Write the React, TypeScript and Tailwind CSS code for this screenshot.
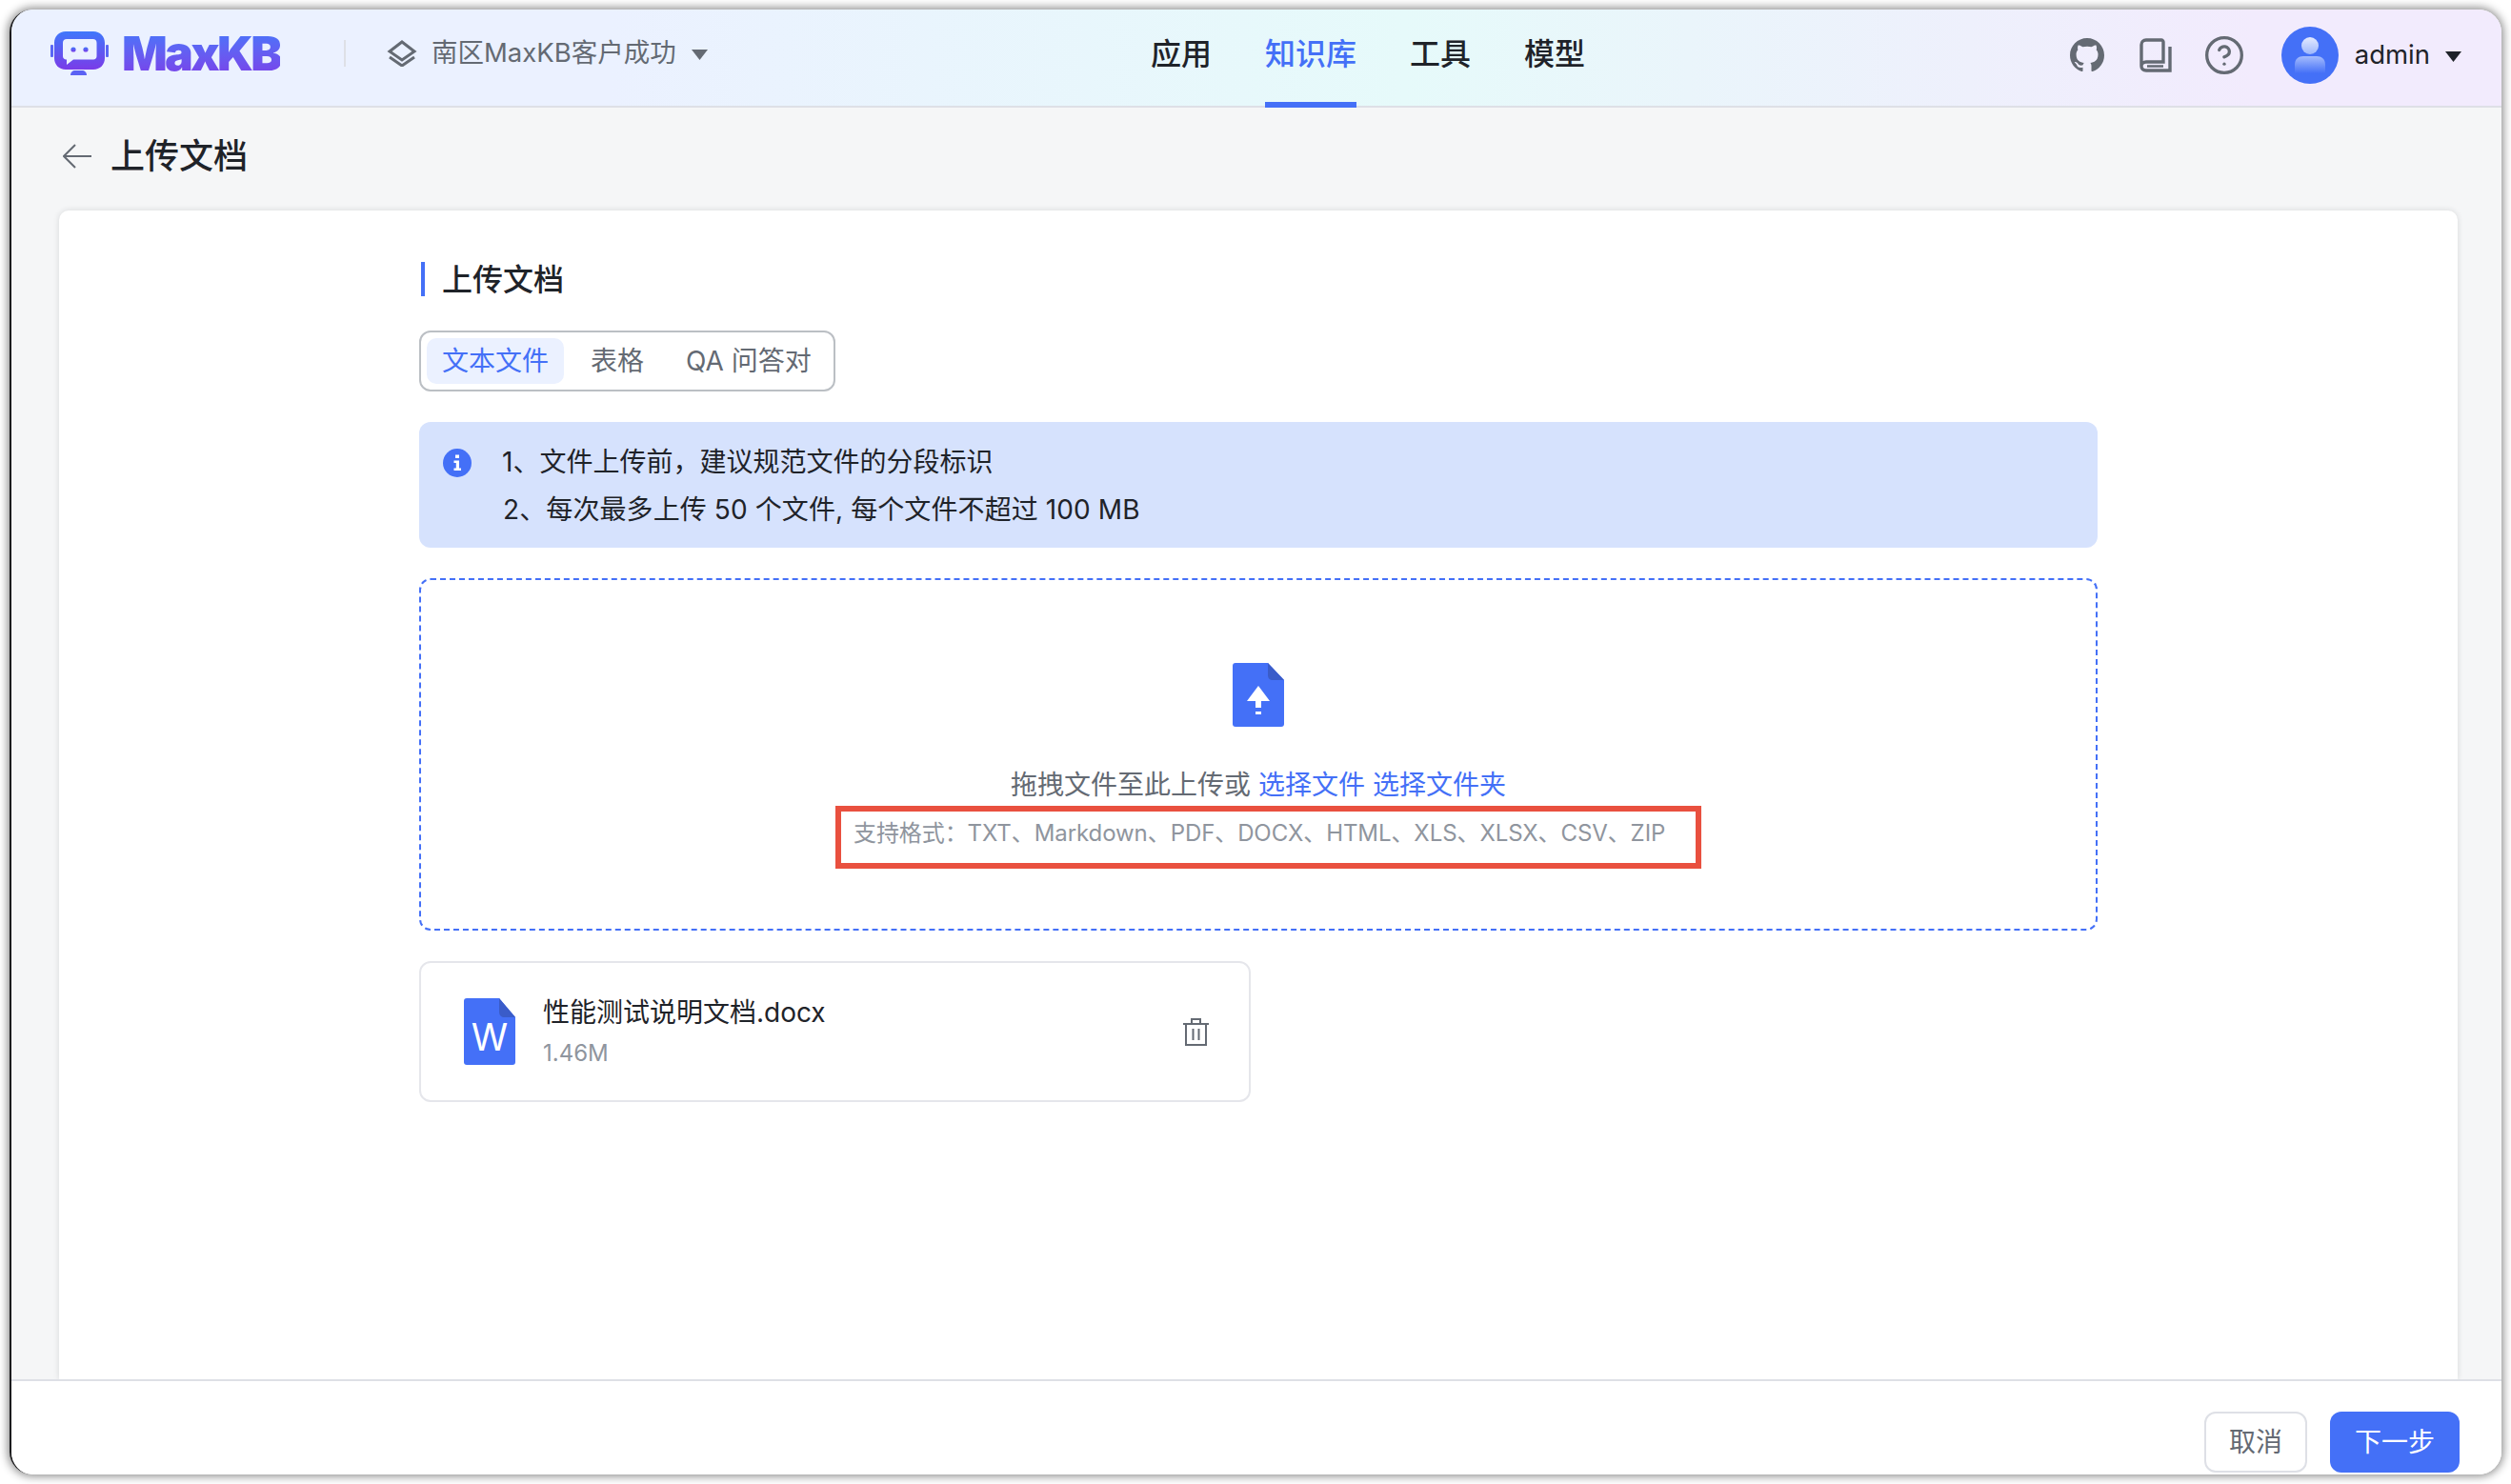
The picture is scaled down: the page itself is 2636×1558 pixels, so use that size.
import { CircleHelp } from "lucide-react";

const navItems = ["应用", "知识库", "工具", "模型"];

function Logo() {
  return (
    <svg width="64" height="48" viewBox="0 0 64 48">
      <defs>
        <linearGradient id="logoFill" x1="0" y1="0" x2="0" y2="1">
          <stop offset="0" stopColor="#3f78fb" />
          <stop offset="1" stopColor="#7a3ce8" />
        </linearGradient>
      </defs>
      <path
        fill="url(#logoFill)"
        fillRule="evenodd"
        d="M18 1h29c7 0 12 5 12 12v16c0 7-5 12-12 12H18c-7 0-12-5-12-12V13C6 6 11 1 18 1zM19 9c-2.500 0-4 1.500-4 4v14c0 2 1.500 3.500 3.500 3.500h.5v5.500l7-5.500h21c2 0 3.500-1.500 3.500-3.500V13c0-2.500-1.500-4-4-4z"
      />
      <circle cx="26" cy="20" r="2.600" fill="url(#logoFill)" />
      <circle cx="39" cy="20" r="2.600" fill="url(#logoFill)" />
      <rect x="2" y="15" width="3" height="13" rx="1" fill="#5a66f5" />
      <rect x="60" y="15" width="3" height="13" rx="1" fill="#5a66f5" />
      <path d="M23 47c0-3 2-5 5-5h7c3 0 5 2 5 5z" fill="#5b62f4" />
    </svg>
  );
}

function UploadFileIcon() {
  return (
    <svg width="54" height="67" viewBox="0 0 54 67">
      <path d="M3 0h34l17 18v46c0 2-1 3-3 3H3c-2 0-3-1-3-3V3c0-2 1-3 3-3z" fill="#4470f7" />
      <path d="M37 0l17 18H42c-3 0-5-2-5-5z" fill="#3a5cc9" />
      <path d="M27 24l12 16h-9v7h-6v-7h-9z" fill="#fff" />
      <rect x="24" y="51" width="6" height="3" fill="#fff" />
    </svg>
  );
}

function WordIcon() {
  return (
    <svg width="54" height="70" viewBox="0 0 54 70">
      <path d="M3 0h34l17 20v47c0 2-1 3-3 3H3c-2 0-3-1-3-3V3c0-2 1-3 3-3z" fill="#4470f7" />
      <path d="M37 0l17 20H43c-4 0-6-2-6-6z" fill="#3a5cc9" />
      <text x="27" y="55" textAnchor="middle" fontSize="39" fill="#fff" fontFamily="Inter">
        W
      </text>
    </svg>
  );
}

function BookIcon() {
  return (
    <svg width="34" height="37" viewBox="0 0 34 37" fill="none" stroke="#646a73" strokeWidth="3.400">
      <path d="M2 29V7c0-3 2-5 5-5h16c1 0 2 1 2 2v21H7c-3 0-5 2-5 4.500S4 34 7 34h25V9" />
      <path d="M8 29.500h17" strokeWidth="2.500" />
    </svg>
  );
}

function Avatar() {
  return (
    <svg width="60" height="60" viewBox="0 0 60 60">
      <defs>
        <linearGradient id="headFill" x1="0" y1="0" x2="0" y2="1">
          <stop offset="0" stopColor="#e3eaff" />
          <stop offset="1" stopColor="#9db7fc" />
        </linearGradient>
        <linearGradient id="bodyFill" x1="0" y1="0" x2="0" y2="1">
          <stop offset="0" stopColor="#a5bcfd" />
          <stop offset="1" stopColor="#4470f7" />
        </linearGradient>
      </defs>
      <circle cx="30" cy="30" r="30" fill="#4470f7" />
      <circle cx="30" cy="20" r="9" fill="url(#headFill)" />
      <path d="M14 49V40c0-6 4-9 9-9h14c5 0 9 3 9 9v9z" fill="url(#bodyFill)" />
    </svg>
  );
}

function Caret({ color }: { color: string }) {
  return (
    <svg width="17" height="11" viewBox="0 0 17 11">
      <path d="M0 0h17l-8.500 11z" fill={color} />
    </svg>
  );
}

function Header() {
  return (
    <header className="flex h-[103px] shrink-0 border-b-2 border-[#dee0e6] bg-[linear-gradient(90deg,#ebf1ff_24%,#e6fafa_56%,#f2ebfd_90%)]">
      <div className="flex h-[92px] w-[1196px] shrink-0 items-center pl-[39px]">
        <Logo />
        <span className="ml-[13px] bg-gradient-to-b from-[#3f78fb] to-[#7a3ce8] bg-clip-text text-[50px] leading-[54px] font-black tracking-[-2.700px] text-transparent">
          MaxKB
        </span>
        <span className="ml-[67px] h-[28px] w-[2px] bg-[#dee0e6]" />
        <svg className="ml-[43px]" width="32" height="28" viewBox="0 0 32 28" fill="none" stroke="#646a73" strokeWidth="3">
          <path d="M16 2l13 10-13 9-13-9z" />
          <path d="M3 18l13 9 13-9" />
        </svg>
        <span className="ml-[15px] text-[27.500px] text-[#646a73]">南区MaxKB客户成功</span>
        <span className="ml-[16px] pt-[2px]">
          <Caret color="#646a73" />
        </span>
      </div>
      <nav className="-mb-[2px] flex gap-[56px]">
        {navItems.map((item) => (
          <a
            key={item}
            className={`flex items-center border-b-[6px] pb-[3px] text-[32px] font-medium ${
              item === "知识库" ? "border-[#4470f7] text-[#4470f7]" : "border-transparent text-[#1f2329]"
            }`}
          >
            {item}
          </a>
        ))}
      </nav>
      <div className="ml-auto flex h-[96px] items-center pr-[42px]">
        <svg width="36" height="36" viewBox="0 0 16 16" fill="#646a73">
          <path d="M8 0C3.580 0 0 3.580 0 8c0 3.540 2.290 6.530 5.470 7.590.4.070.55-.17.55-.38 0-.19-.01-.82-.01-1.490-2.010.37-2.530-.49-2.690-.94-.09-.23-.48-.94-.82-1.130-.28-.15-.68-.52-.01-.53.63-.01 1.080.58 1.230.82.72 1.210 1.870.87 2.330.66.07-.52.28-.87.51-1.070-1.780-.2-3.640-.89-3.640-3.950 0-.87.31-1.590.82-2.150-.08-.2-.36-1.020.08-2.120 0 0 .67-.21 2.200.82.64-.18 1.320-.27 2-.27.68 0 1.360.09 2 .27 1.530-1.040 2.200-.82 2.200-.82.44 1.100.16 1.920.08 2.120.51.56.82 1.270.82 2.150 0 3.070-1.870 3.750-3.650 3.950.29.25.54.73.54 1.480 0 1.070-.01 1.930-.01 2.200 0 .21.15.46.55.38A8.013 8.013 0 0016 8c0-4.420-3.580-8-8-8z" />
        </svg>
        <span className="ml-[37px]">
          <BookIcon />
        </span>
        <CircleHelp className="ml-[33px]" size={44} strokeWidth={1.800} color="#646a73" />
        <span className="ml-[38px]">
          <Avatar />
        </span>
        <span className="ml-[17px] text-[27.500px] text-[#1f2329]">admin</span>
        <span className="ml-[16px] pt-[2px]">
          <Caret color="#1f2329" />
        </span>
      </div>
    </header>
  );
}

function UploadCard() {
  return (
    <div className="flex-1 rounded-t-[10px] bg-white pt-[54px] pl-[378px] shadow-[0_0_6px_rgba(31,35,41,0.14)]">
      <div className="flex w-[1762px] flex-col">
        <div className="ml-[2px] flex h-[36px] items-center border-l-4 border-[#4470f7] pt-[1px] pl-[18px] text-[32px] font-medium text-[#1f2329]">
          上传文档
        </div>

        <div className="mt-[36px] flex h-[64px] w-fit items-center gap-[12px] rounded-[12px] border-2 border-[#bbbfc4] pr-[7px] pl-[6px] text-[28px] text-[#646a73]">
          <span className="flex h-[48px] items-center rounded-[10px] bg-[#ebf1ff] px-[16px] text-[#4470f7]">文本文件</span>
          <span className="px-[16px]">表格</span>
          <span className="px-[16px]">QA 问答对</span>
        </div>

        <div className="mt-[32px] flex h-[132px] rounded-[12px] bg-[#d6e2fd] pt-[17px] pl-[25px]">
          <svg className="mt-[11px] shrink-0" width="30" height="30" viewBox="0 0 30 30">
            <circle cx="15" cy="15" r="15" fill="#4470f7" />
            <rect x="13" y="6.500" width="4" height="3.500" fill="#fff" />
            <path d="M11.500 12.500H17v8h2v2.500h-7.500v-2.500h2.300v-5.500h-2.300z" fill="#fff" />
          </svg>
          <div className="ml-[32px] text-[28px] leading-[50px] text-[#1f2329]">
            <p>1、文件上传前，建议规范文件的分段标识</p>
            <p className="pl-[1px] tracking-[0.100px]">2、每次最多上传 50 个文件, 每个文件不超过 100 MB</p>
          </div>
        </div>

        <div className="mt-[32px] flex h-[370px] flex-col items-center rounded-[12px] border-2 border-dashed border-[#4470f7] pt-[87px]">
          <UploadFileIcon />
          <p className="mt-[41px] text-[28px] leading-[40px] text-[#646a73]">
            拖拽文件至此上传或 <span className="text-[#4470f7]">选择文件</span>{" "}
            <span className="text-[#4470f7]">选择文件夹</span>
          </p>
          <div className="mt-[2px] ml-[21px] h-[66px] w-[909px] border-[6px] border-[#e9503f] pt-[1px] pl-[13px] text-[24px] leading-[44px] tracking-[-0.080px] whitespace-nowrap text-[#8f959e]">
            支持格式：TXT、Markdown、PDF、DOCX、HTML、XLS、XLSX、CSV、ZIP
          </div>
        </div>

        <div className="mt-[32px] flex h-[148px] w-[873px] items-center rounded-[12px] border-2 border-[#e5e6eb] pr-[42px] pl-[45px]">
          <WordIcon />
          <div className="ml-[29px] flex-1">
            <p className="text-[28px] leading-[40px] text-[#1f2329]">性能测试说明文档.docx</p>
            <p className="mt-[6px] text-[24px] leading-[34px] text-[#8f959e]">1.46M</p>
          </div>
          <svg width="27" height="29" viewBox="0 0 27 29" fill="none" stroke="#646a73" strokeWidth="2">
            <path d="M0 6h27M9 6V1h9v5M3 6v22h21V6M10.500 11v12M16.500 11v12" />
          </svg>
        </div>
      </div>
    </div>
  );
}

export default function App() {
  return (
    <div className="h-[1558px] w-[2636px] overflow-hidden bg-white py-[10px] pr-[10px] pl-[10px] [font-family:Inter,'Noto_Sans_CJK_SC',sans-serif]">
      <div className="flex h-full flex-col overflow-hidden rounded-[24px] border-l-2 border-[#1c1c1e] bg-white shadow-[0_0_10px_2px_rgba(0,0,0,0.45)]">
        <Header />
        <main className="flex flex-1 flex-col bg-[#f5f6f7] pr-[46px] pl-[50px]">
          <div className="flex h-[108px] shrink-0 items-center pb-[6px] pl-[4px]">
            <svg width="30" height="26" viewBox="0 0 30 26" fill="none" stroke="#646a73" strokeWidth="2">
              <path d="M1 13h29M13 1L1 13l12 12" />
            </svg>
            <h1 className="ml-[20px] text-[36px] font-medium text-[#1f2329]">上传文档</h1>
          </div>
          <UploadCard />
        </main>
        <footer className="flex h-[100px] shrink-0 justify-end gap-[24px] border-t-2 border-[#dee0e6] bg-white pt-[32px] pr-[44px]">
          <button className="h-[64px] w-[108px] rounded-[12px] border-2 border-[#dee0e6] bg-white text-[28px] text-[#646a73]">
            取消
          </button>
          <button className="h-[64px] w-[136px] rounded-[12px] bg-[#4470f7] text-[28px] text-white">下一步</button>
        </footer>
      </div>
    </div>
  );
}
